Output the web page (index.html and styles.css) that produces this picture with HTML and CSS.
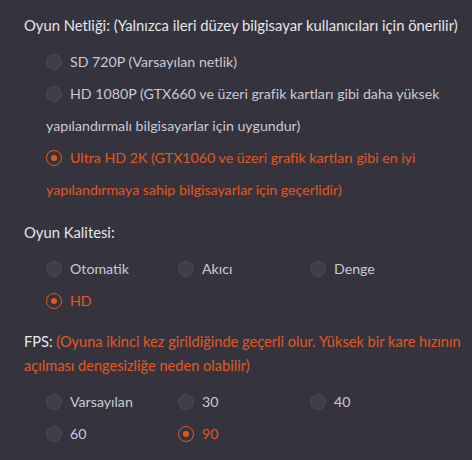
FILE: index.html
```html
<!DOCTYPE html>
<html lang="tr">
<head>
    <meta charset="UTF-8">
    <meta name="viewport" content="width=device-width, initial-scale=1.0">
    <title>Oyun Ayarları</title>
    <link rel="stylesheet" href="styles.css">
</head>
<body>
    <section class="settings">
        <h3 class="group-title">Oyun Netliği: (Yalnızca ileri düzey bilgisayar kullanıcıları için önerilir)</h3>
        <div class="option-list">
            <label class="option"><span class="radio"></span>SD 720P (Varsayılan netlik)</label>
            <label class="option"><span class="radio"></span>HD 1080P (GTX660 ve üzeri grafik kartları gibi daha yüksek<br>yapılandırmalı bilgisayarlar için uygundur)</label>
            <label class="option checked"><span class="radio"></span>Ultra HD 2K (GTX1060 ve üzeri grafik kartları gibi en iyi<br>yapılandırmaya sahip bilgisayarlar için geçerlidir)</label>
        </div>

        <h3 class="group-title quality">Oyun Kalitesi:</h3>
        <div class="option-grid">
            <label class="option"><span class="radio"></span>Otomatik</label>
            <label class="option"><span class="radio"></span>Akıcı</label>
            <label class="option"><span class="radio"></span>Denge</label>
            <label class="option checked"><span class="radio"></span>HD</label>
        </div>

        <p class="group-title fps">FPS: <span class="note">(Oyuna ikinci kez girildiğinde geçerli olur. Yüksek bir kare hızının<br>açılması dengesizliğe neden olabilir)</span></p>
        <div class="option-grid">
            <label class="option"><span class="radio"></span>Varsayılan</label>
            <label class="option"><span class="radio"></span>30</label>
            <label class="option"><span class="radio"></span>40</label>
            <label class="option"><span class="radio"></span>60</label>
            <label class="option checked"><span class="radio"></span>90</label>
        </div>
    </section>
</body>
</html>
```

FILE: styles.css
```css
body {
    margin: 0;
    background: #35333e;
    font-family: Lato, "Open Sans", sans-serif;
    font-size: 14.2px;
    color: #cbcad1;
}
.settings {
    padding: 13px 0 0 24px;
}
.group-title {
    margin: 0;
    font-size: 14.8px;
    font-weight: normal;
    line-height: 24px;
    color: #e6e5ea;
    white-space: nowrap;
}
.group-title.quality { margin-top: 14px; }
.group-title.fps { margin-top: 13px; font-size: 14.6px; }
.note { color: #e4581f; }
.option-list { margin-top: 9px; padding-left: 22px; }
.option-grid {
    display: grid;
    grid-template-columns: 132px 132px 132px;
    margin-top: 9px;
    padding-left: 22px;
}
.fps + .option-grid { margin-top: 8px; }
.option {
    display: block;
    line-height: 32px;
    white-space: nowrap;
    cursor: pointer;
}
.radio {
    display: inline-block;
    box-sizing: border-box;
    width: 16px;
    height: 16px;
    margin-right: 8px;
    vertical-align: -3px;
    border: 1px solid #4b4956;
    border-radius: 50%;
    background: #403e4a;
    position: relative;
}
.option.checked { color: #e4581f; }
.option.checked .radio {
    border-color: #e4581f;
    background: transparent;
}
.option.checked .radio::after {
    content: "";
    position: absolute;
    left: 4px;
    top: 4px;
    width: 6px;
    height: 6px;
    border-radius: 50%;
    background: #e4581f;
}
```
